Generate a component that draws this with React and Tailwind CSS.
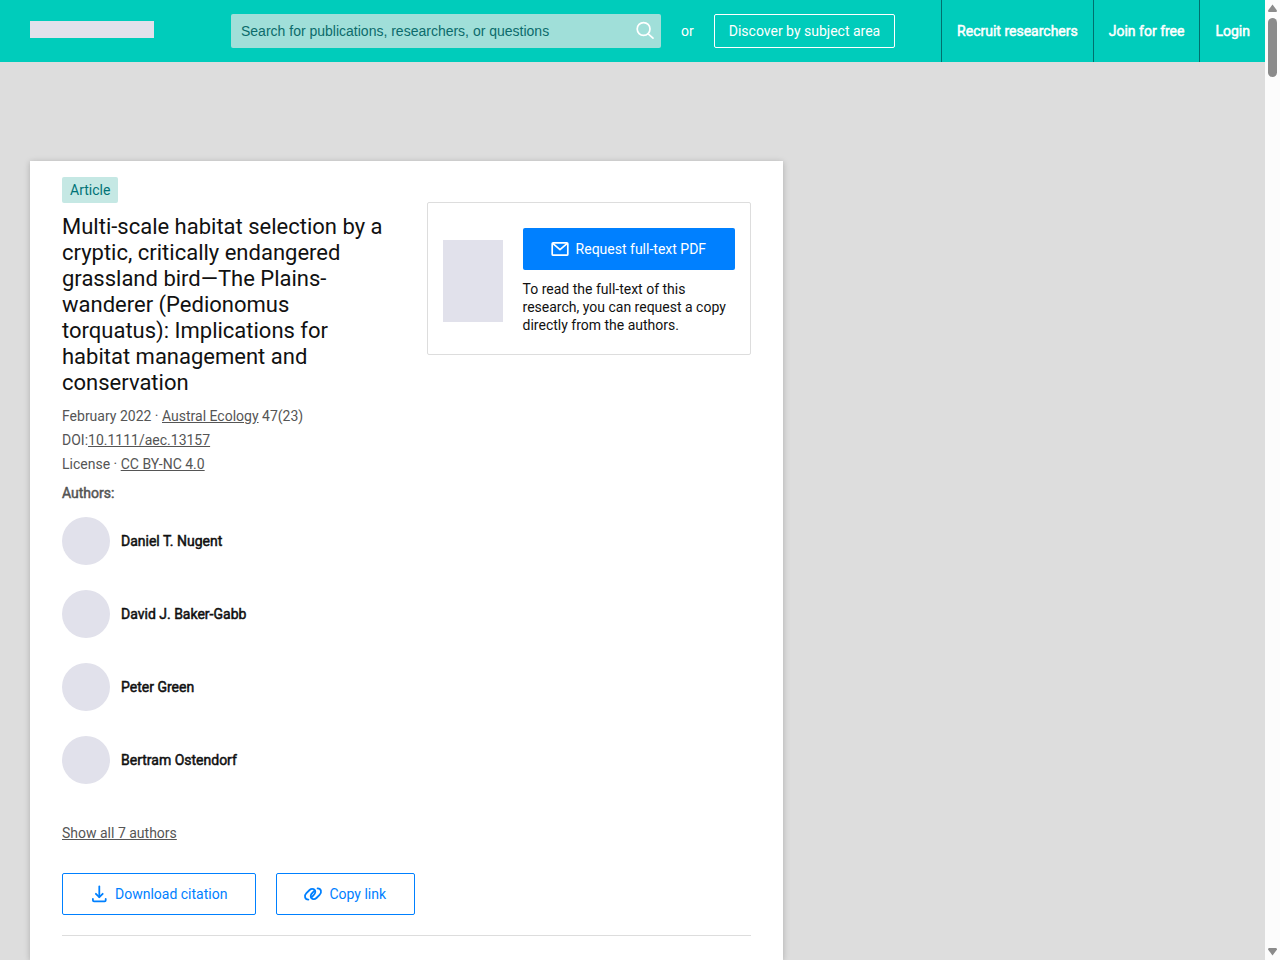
import { useState } from 'react';

const authors = [
  'Daniel T. Nugent',
  'David J. Baker-Gabb',
  'Peter Green',
  'Bertram Ostendorf',
];

function SearchIcon() {
  return (
    <svg className="h-5 w-5" viewBox="0 0 20 20" fill="none" stroke="currentColor" strokeWidth="1.7" strokeLinecap="round">
      <circle cx="8.6" cy="8" r="6.400" />
      <path d="M13.2 12.800L18 17.200" />
    </svg>
  );
}

function MailIcon() {
  return (
    <svg className="h-6 w-6" viewBox="0 0 24 24" fill="none" stroke="currentColor" strokeWidth="1.7" strokeLinecap="round" strokeLinejoin="round">
      <rect x="4.2" y="5.8" width="15.6" height="12.400" rx="1" />
      <path d="M5 6.6l7 6 7-6" />
    </svg>
  );
}

function DownloadIcon() {
  return (
    <svg className="h-6 w-6" viewBox="0 0 24 24" fill="none" stroke="currentColor" strokeWidth="1.8" strokeLinecap="round" strokeLinejoin="round">
      <path d="M12.300 4.5v10.5" />
      <path d="M8.900 11.8l3.400 3.400 3.400-3.400" />
      <path d="M5.900 17v1.300c0 .6.5 1.100 1.100 1.100h10.600c.6 0 1.100-.5 1.100-1.100V17" />
    </svg>
  );
}

function LinkIcon() {
  return (
    <svg className="h-6 w-6" viewBox="0 0 24 24" fill="none" stroke="currentColor" strokeWidth="1.8" strokeLinecap="round" strokeLinejoin="round">
      <path d="M7.400 17.600C3.600 17.600 3 13.600 5.400 11.200L8.600 8C11 5.600 14.800 7.200 14.200 10.600C14 11.800 13.200 12.600 12.200 13.600L10.600 15.200" />
      <path d="M16.600 6.400C20.400 6.400 21 10.400 18.600 12.800L15.400 16C13 18.400 9.200 16.800 9.800 13.400C10 12.200 10.800 11.400 11.800 10.400L13.400 8.800" />
    </svg>
  );
}

function Header() {
  const [query, setQuery] = useState('');

  return (
    <header className="flex h-[62px] shrink-0 items-center bg-[#00ccbb] pl-[30px] text-white">
      <a href="#home" aria-label="Home" className="mb-1 h-[17px] w-[124px] bg-[#e1e1eb]" />
      <form className="ml-[77px] flex h-[34px] w-[430px] items-center rounded-xs bg-[#a0dfd9] pr-1.5 pl-2.5" onSubmit={(e) => e.preventDefault()}>
        <input
          type="text"
          aria-label="Search"
          value={query}
          onChange={(e) => setQuery(e.target.value)}
          placeholder="Search for publications, researchers, or questions"
          className="min-w-0 flex-1 font-['Liberation_Sans',Arial,sans-serif] text-sm text-[#0c6b6b] outline-none placeholder:text-[#0c6b6b]"
        />
        <button type="submit" aria-label="Submit search">
          <SearchIcon />
        </button>
      </form>
      <span className="mx-5">or</span>
      <a href="#topics" className="flex h-[34px] items-center rounded-xs border border-white px-3.5">
        Discover by subject area
      </a>
      <nav className="ml-auto flex h-full [-webkit-text-stroke:0.5px_currentColor]">
        <a href="#recruit" className="flex items-center border-l border-[#00706e] px-[15px]">Recruit researchers</a>
        <a href="#join" className="flex items-center border-l border-[#00706e] px-[15px]">Join for free</a>
        <a href="#login" className="flex items-center border-l border-[#00706e] px-[15px]">Login</a>
      </nav>
    </header>
  );
}

function RequestBox() {
  return (
    <div className="mt-[25px] flex items-center gap-5 self-start rounded-xs border border-[#dddddd] px-[15px] pt-[25px] pb-5">
      <div className="h-[82px] w-[60px] shrink-0 bg-[#e1e1eb]" />
      <div className="flex-1">
        <button type="button" className="flex h-[42px] w-full items-center justify-center rounded-xs bg-[#0080ff] text-white">
          <MailIcon />
          <span className="mx-1">Request full-text PDF</span>
        </button>
        <p className="mt-2.5 leading-[18px] text-[#111111]">
          To read the full-text of this research, you can request a copy directly from the authors.
        </p>
      </div>
    </div>
  );
}

function ArticleInfo() {
  return (
    <div>
      <span className="inline-flex h-[26px] items-center rounded-xs bg-[#c5e8e4] px-2 text-[#007377]">Article</span>
      <h1 className="mt-[11px] text-[22px] leading-[26px] text-[#111111]">
        Multi-scale habitat selection by a cryptic, critically endangered grassland bird—The Plains-wanderer (Pedionomus torquatus): Implications for habitat management and conservation
      </h1>
      <div className="mt-2 leading-6">
        <p>February 2022 · <a href="#journal" className="underline">Austral Ecology</a> 47(23)</p>
        <p>DOI:<a href="#doi" className="underline">10.1111/aec.13157</a></p>
        <p>License · <a href="#license" className="underline">CC BY-NC 4.0</a></p>
      </div>
    </div>
  );
}

function Authors() {
  return (
    <section>
      <h2 className="mt-[7px] [-webkit-text-stroke:0.5px_currentColor]">Authors:</h2>
      <ul className="mt-3.5 flex flex-col gap-[25px]">
        {authors.map((name) => (
          <li key={name} className="flex items-center gap-[11px]">
            <span className="h-12 w-12 rounded-full bg-[#e1e1eb]" />
            <a href="#profile" className="text-[#111111] [-webkit-text-stroke:0.5px_currentColor]">{name}</a>
          </li>
        ))}
      </ul>
      <button type="button" className="mt-[39px] underline">Show all 7 authors</button>
    </section>
  );
}

function Actions() {
  return (
    <div className="mt-[30px] flex gap-5 border-b border-[#dddddd] pb-5 text-[#0080ff]">
      <button type="button" className="flex h-[42px] items-center rounded-xs border border-[#0080ff] px-6">
        <DownloadIcon />
        <span className="mx-1">Download citation</span>
      </button>
      <button type="button" className="flex h-[42px] items-center rounded-xs border border-[#0080ff] px-6">
        <LinkIcon />
        <span className="mx-1">Copy link</span>
      </button>
    </div>
  );
}

function ScrollTrack() {
  return (
    <div aria-hidden="true" className="flex w-[15px] shrink-0 flex-col items-center bg-[#fcfcfc] py-1 text-[#8b8b8b]">
      <svg className="h-2 w-[9px]" viewBox="0 0 9 8" fill="currentColor">
        <path d="M4.500 0.500L9 6.500Q9 8 8 8H1Q0 8 0 6.500Z" />
      </svg>
      <div className="mt-1.5 h-[59px] w-[9px] rounded-full bg-[#8b8b8b]" />
      <svg className="mt-auto h-2 w-[9px]" viewBox="0 0 9 8" fill="currentColor">
        <path d="M4.500 7.500L9 1.500Q9 0 8 0H1Q0 0 0 1.500Z" />
      </svg>
    </div>
  );
}

export default function App() {
  return (
    <div className="flex h-screen overflow-hidden bg-[#dddddd] font-[Roboto,sans-serif] text-sm text-[#555555]">
      <div className="flex min-w-0 flex-1 flex-col">
        <Header />
        <main className="flex flex-1 px-[30px] pt-[99px]">
          <article className="w-5/8 bg-white px-8 pt-4 shadow-[0_1px_6px_rgba(0,0,0,0.22)]">
            <div className="grid grid-cols-2 gap-10">
              <ArticleInfo />
              <RequestBox />
            </div>
            <Authors />
            <Actions />
          </article>
        </main>
      </div>
      <ScrollTrack />
    </div>
  );
}
